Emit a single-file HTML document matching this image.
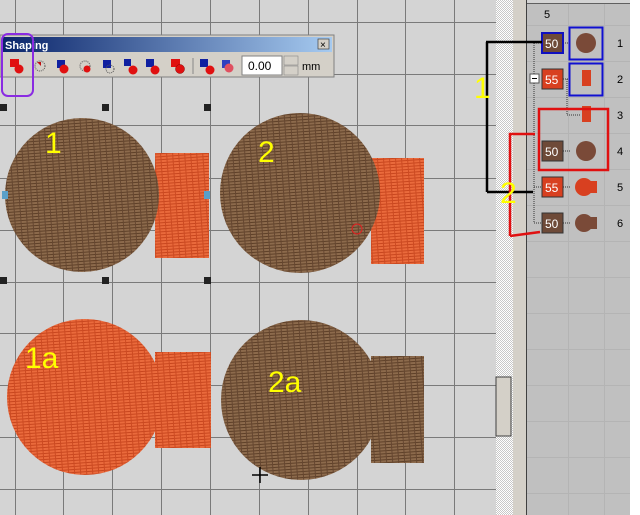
<!DOCTYPE html>
<html><head><meta charset="utf-8"><style>
body{margin:0;width:640px;height:515px;overflow:hidden;background:#d4d4d4;font-family:"Liberation Sans",sans-serif}
</style></head><body>
<svg width="640" height="515" xmlns="http://www.w3.org/2000/svg" style="position:absolute;left:0;top:0">
<defs>
<pattern id="br" width="6" height="3" patternUnits="userSpaceOnUse" patternTransform="rotate(-4)">
<rect width="6" height="3" fill="#8c6a4c"/><rect y="2" width="6" height="1" fill="#5e4028"/><rect x="5" width="1" height="3" fill="#654630"/></pattern>
<pattern id="or" width="6" height="3" patternUnits="userSpaceOnUse" patternTransform="rotate(-4)">
<rect width="6" height="3" fill="#ea6a3c"/><rect y="2" width="6" height="1" fill="#c8461e"/><rect x="5" width="1" height="3" fill="#cc4a22"/></pattern>
<pattern id="hatch" width="2" height="2" patternUnits="userSpaceOnUse"><rect width="2" height="2" fill="#fff"/><rect width="1" height="1" fill="#c8c8c8"/><rect x="1" y="1" width="1" height="1" fill="#c8c8c8"/></pattern>
</defs>
<rect width="496" height="515" fill="#d4d4d4"/>
<g stroke="#7a7a7a" stroke-width="1">
<line x1="15.5" y1="0" x2="15.5" y2="515"/><line x1="63.5" y1="0" x2="63.5" y2="515"/><line x1="112.5" y1="0" x2="112.5" y2="515"/><line x1="161.5" y1="0" x2="161.5" y2="515"/><line x1="210.5" y1="0" x2="210.5" y2="515"/><line x1="259.5" y1="0" x2="259.5" y2="515"/><line x1="308.5" y1="0" x2="308.5" y2="515"/><line x1="357.5" y1="0" x2="357.5" y2="515"/><line x1="405.5" y1="0" x2="405.5" y2="515"/><line x1="454.5" y1="0" x2="454.5" y2="515"/>
<line x1="0" y1="22.5" x2="496" y2="22.5"/><line x1="0" y1="74.5" x2="496" y2="74.5"/><line x1="0" y1="125.5" x2="496" y2="125.5"/><line x1="0" y1="178.5" x2="496" y2="178.5"/><line x1="0" y1="230.5" x2="496" y2="230.5"/><line x1="0" y1="282.5" x2="496" y2="282.5"/><line x1="0" y1="333.5" x2="496" y2="333.5"/><line x1="0" y1="385.5" x2="496" y2="385.5"/><line x1="0" y1="437.5" x2="496" y2="437.5"/><line x1="0" y1="489.5" x2="496" y2="489.5"/>
</g>
<rect x="155" y="153" width="54" height="105" fill="url(#or)"/>
<circle cx="82" cy="195" r="77" fill="url(#br)"/>
<rect x="371" y="158" width="53" height="106" fill="url(#or)"/>
<circle cx="300" cy="193" r="80" fill="url(#br)"/>
<circle cx="357" cy="229" r="5" fill="none" stroke="#e02020"/>
<rect x="155" y="352" width="56" height="96" fill="url(#or)"/>
<circle cx="85" cy="397" r="78" fill="url(#or)"/>
<rect x="371" y="356" width="53" height="107" fill="url(#br)"/>
<circle cx="301" cy="400" r="80" fill="url(#br)"/>
<g fill="#ffff00" font-size="30">
<text x="45" y="153">1</text><text x="258" y="162">2</text><text x="25" y="368">1a</text><text x="268" y="392">2a</text></g>
<g fill="#222"><rect x="0" y="104" width="7" height="7"/><rect x="102" y="104" width="7" height="7"/><rect x="204" y="104" width="7" height="7"/><rect x="0" y="277" width="7" height="7"/><rect x="102" y="277" width="7" height="7"/><rect x="204" y="277" width="7" height="7"/></g>
<rect x="2" y="191" width="6" height="8" fill="#5aa0c8"/><rect x="204" y="191" width="6" height="8" fill="#5aa0c8"/>
<path d="M260 467v16M252 475h16" stroke="#000" stroke-width="1.5"/>
<rect x="0" y="35" width="334" height="42" fill="#d4d0c8" stroke="#808080"/>
<defs><linearGradient id="tg"><stop offset="0" stop-color="#0a246a"/><stop offset="1" stop-color="#a6caf0"/></linearGradient></defs>
<rect x="2" y="37" width="330" height="15" fill="url(#tg)"/>
<text x="5" y="49" fill="#fff" font-size="11" font-weight="bold">Shaping</text>
<rect x="318" y="39" width="11" height="10" fill="#d4d0c8" stroke="#404040" stroke-width=".7"/>
<text x="320" y="48" font-size="10">×</text>
<g>
<rect x="10" y="59" width="9" height="8" fill="#e01010"/><circle cx="19" cy="69" r="4.5" fill="#e01010"/>
<circle cx="40" cy="66" r="5" fill="none" stroke="#555" stroke-dasharray="1 1"/><path d="M37 62h4v4z" fill="#c01010"/>
<rect x="57" y="60" width="8" height="8" fill="#1020a0"/><circle cx="64" cy="69" r="4.5" fill="#e01010"/>
<circle cx="85" cy="66" r="5" fill="none" stroke="#555" stroke-dasharray="1 1"/><circle cx="87" cy="69" r="3.5" fill="#e01010"/>
<rect x="103" y="60" width="8" height="8" fill="#1020a0"/><circle cx="110" cy="69" r="4" fill="none" stroke="#555" stroke-dasharray="1 1"/>
<rect x="124" y="59" width="7" height="7" fill="#1020a0"/><circle cx="133" cy="70" r="4.5" fill="#e01010"/>
<rect x="146" y="59" width="8" height="8" fill="#1020a0"/><circle cx="155" cy="70" r="4.5" fill="#e01010"/>
<rect x="171" y="59" width="9" height="8" fill="#e01010"/><circle cx="180" cy="69" r="4.5" fill="#e01010" stroke="#800" stroke-width=".5"/>
<line x1="193" y1="58" x2="193" y2="74" stroke="#888"/>
<rect x="200" y="59" width="8" height="8" fill="#1020a0"/><circle cx="210" cy="70" r="4.5" fill="#e01010"/>
<rect x="222" y="60" width="8" height="8" fill="#3040c0"/><circle cx="229" cy="68" r="4.5" fill="#e05060"/>
</g>
<rect x="242" y="56" width="40" height="19" fill="#fff" stroke="#808080"/>
<text x="248" y="70" font-size="12">0.00</text>
<rect x="284" y="56" width="14" height="9" fill="#d4d0c8" stroke="#888" stroke-width=".6"/><rect x="284" y="66" width="14" height="9" fill="#d4d0c8" stroke="#888" stroke-width=".6"/>
<text x="302" y="70" font-size="11">mm</text>
<rect x="2" y="34" width="31" height="62" rx="6" fill="none" stroke="#8a2be2" stroke-width="2"/>
<rect x="496" y="0" width="17" height="515" fill="url(#hatch)"/>
<rect x="496" y="377" width="15" height="59" fill="#d4d0c8" stroke="#404040" stroke-width="1"/>
<rect x="513" y="0" width="14" height="515" fill="#d4d0c8"/>
<line x1="526.5" y1="0" x2="526.5" y2="515" stroke="#404040"/>
<rect x="527" y="3" width="103" height="512" fill="#c0c0c0"/>
<line x1="527" y1="3.5" x2="630" y2="3.5" stroke="#606060"/>
<rect x="630" y="0" width="10" height="515" fill="#ffffff"/>
<g stroke="#b4b4b4"><line x1="568.5" y1="4" x2="568.5" y2="515"/><line x1="604.5" y1="4" x2="604.5" y2="515"/>
<line x1="527" y1="25.5" x2="630" y2="25.5"/><line x1="527" y1="61.5" x2="630" y2="61.5"/><line x1="527" y1="97.5" x2="630" y2="97.5"/><line x1="527" y1="133.5" x2="630" y2="133.5"/><line x1="527" y1="169.5" x2="630" y2="169.5"/><line x1="527" y1="205.5" x2="630" y2="205.5"/><line x1="527" y1="241.5" x2="630" y2="241.5"/><line x1="527" y1="277.5" x2="630" y2="277.5"/><line x1="527" y1="313.5" x2="630" y2="313.5"/><line x1="527" y1="349.5" x2="630" y2="349.5"/><line x1="527" y1="385.5" x2="630" y2="385.5"/><line x1="527" y1="421.5" x2="630" y2="421.5"/><line x1="527" y1="457.5" x2="630" y2="457.5"/><line x1="527" y1="493.5" x2="630" y2="493.5"/></g>
<text x="544" y="18" font-size="11">5</text>
<g stroke="#333" stroke-dasharray="1 1" fill="none"><path d="M534 43v180M534 43h8M534 187h8M534 223h8M563 43h6M563 79h8M563 151h8M563 187h8M563 223h8M567 79v36h13"/></g>
<rect x="530" y="74" width="9" height="9" fill="#fff" stroke="#555"/><line x1="532" y1="78.5" x2="537" y2="78.5" stroke="#000"/>
<g font-size="12" fill="#fff">
<rect x="542" y="33" width="21" height="20" fill="#6e4a38" stroke="#1010c0" stroke-width="2"/><text x="545" y="48">50</text>
<rect x="542" y="69" width="21" height="20" fill="#d84020" stroke="#333"/><text x="545" y="84">55</text>
<rect x="542" y="141" width="21" height="20" fill="#6e4a38" stroke="#333"/><text x="545" y="156">50</text>
<rect x="542" y="177" width="21" height="20" fill="#d84020" stroke="#333"/><text x="545" y="192">55</text>
<rect x="542" y="213" width="21" height="20" fill="#6e4a38" stroke="#333"/><text x="545" y="228">50</text>
</g>
<circle cx="586" cy="43" r="10" fill="#7a4a38"/>
<rect x="582" y="70" width="9" height="16" fill="#d84020"/>
<rect x="582" y="106" width="9" height="16" fill="#d84020"/>
<circle cx="586" cy="151" r="10" fill="#7a4a38"/>
<circle cx="584" cy="187" r="9" fill="#d84020"/><rect x="588" y="181" width="9" height="12" fill="#d84020"/>
<circle cx="584" cy="223" r="9" fill="#7a4a38"/><rect x="588" y="217" width="9" height="12" fill="#7a4a38"/>
<rect x="569.5" y="27.5" width="33" height="32" fill="none" stroke="#1010d0" stroke-width="2"/>
<rect x="569.5" y="63.5" width="33" height="32" fill="none" stroke="#1010d0" stroke-width="2"/>
<rect x="539" y="109" width="69" height="61" fill="none" stroke="#e01010" stroke-width="2.5"/>
<g font-size="11"><text x="617" y="47">1</text><text x="617" y="83">2</text><text x="617" y="119">3</text><text x="617" y="155">4</text><text x="617" y="191">5</text><text x="617" y="227">6</text></g>
<path d="M486 42h56M487 42v150M487 192h46" stroke="#000" stroke-width="2.5" fill="none"/>
<path d="M535 134h-25v102M510 236l30-4" stroke="#e01010" stroke-width="2.5" fill="none"/>
<text x="474" y="98" fill="#ffff00" font-size="30">1</text>
<text x="500" y="203" fill="#ffff00" font-size="30">2</text>
</svg>
</body></html>
